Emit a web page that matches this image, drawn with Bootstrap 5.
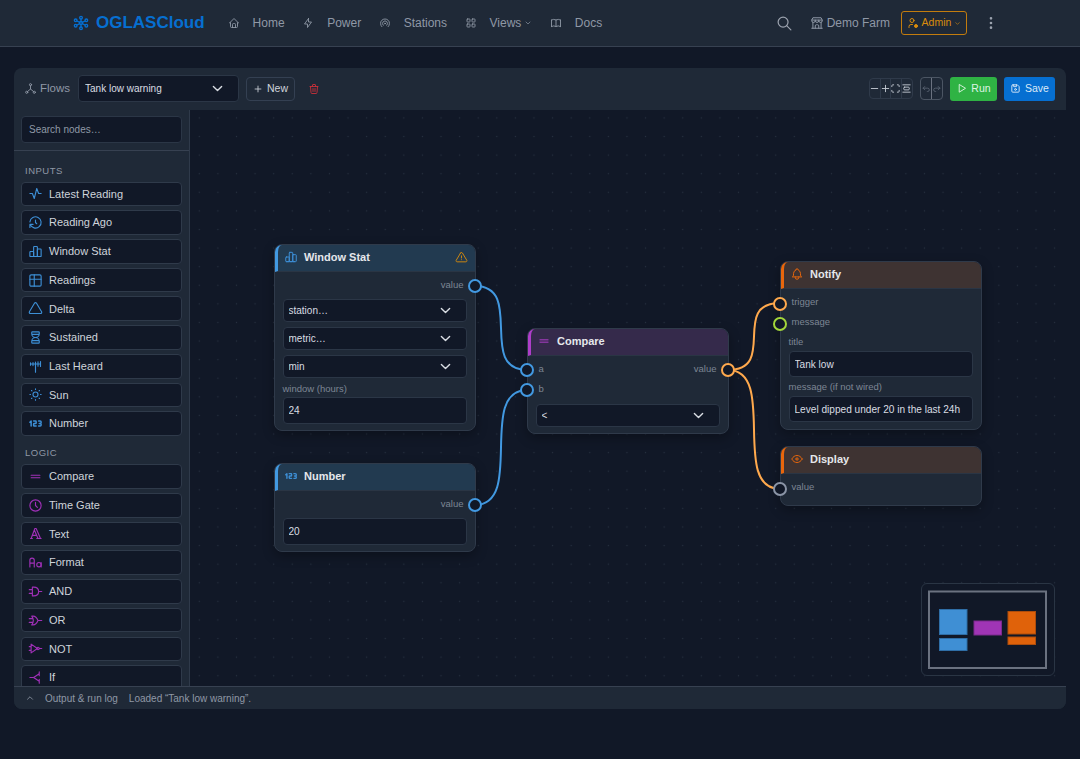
<!DOCTYPE html>
<html lang="en" data-bs-theme="dark">
<head>
<meta charset="utf-8">
<title>OGLASCloud Flows</title>
<link rel="stylesheet" href="https://cdn.jsdelivr.net/npm/bootstrap@5.3.0/dist/css/bootstrap.min.css">
<style>
html,body{height:100%}
body{background:#111827;color:#d1d5db;font-family:"Liberation Sans",Arial,sans-serif;font-size:12px;overflow:hidden}
.ic{width:1em;height:1em;fill:none;stroke:currentColor;stroke-width:2;stroke-linecap:round;stroke-linejoin:round;flex:none;display:block}
.topbar{height:47px;background:#1f2937;border-bottom:1px solid #374151;padding:0 81px 0 73px}
.brandline{color:#066fd1;font-size:17px;font-weight:700;text-decoration:none;gap:7px;margin-right:23px}
.brandline .ic{font-size:16px}
.toplink{color:#8f98a6;text-decoration:none;font-size:12px;gap:13px;margin-right:17.500px}
.toplink .ic{font-size:12px;stroke-width:1.8}
.toplink .chev{font-size:8px;margin-left:-10px;stroke-width:2}
.farm{color:#8f98a6;font-size:12px;gap:3px}
.farm .ic{font-size:14px;stroke-width:1.7}
.srch{color:#9ca3af;font-size:17px;margin-right:17px}
.srch .ic{stroke-width:1.7}
.adminbtn{height:24px;width:66px;border:1px solid #c27c0e;border-radius:3px;color:#d98c0c;font-size:10.5px;font-weight:500;gap:3px;margin-left:11px;padding:0;background:transparent}
.adminbtn .ic{font-size:12px}
.adminbtn .chev{font-size:7px}
.kebab{color:#9ca3af;font-size:16px;margin-left:16px}
.wrap{padding:21px 14px 0}
.panel{height:641px;background:#1f2937;border-radius:8px;overflow:hidden}
.tools{height:42px;padding:0 11px 0 10px;border-bottom:1px solid #1f2937}
.flowlbl{color:#8f98a6;font-size:11.5px;gap:3px;margin-right:8px}
.flowlbl .ic{font-size:13px;stroke-width:1.7}
.fieldish{background-color:#111827;border:1px solid #2b3646;color:#d9dde3;border-radius:4px;font-size:10px;padding:0 7px;width:100%;box-shadow:none}
select.fieldish{appearance:none;background-image:url("data:image/svg+xml,%3csvg xmlns='http://www.w3.org/2000/svg' viewBox='0 0 16 16'%3e%3cpath fill='none' stroke='%23d9dde3' stroke-linecap='round' stroke-linejoin='round' stroke-width='2' d='m2 5 6 6 6-6'/%3e%3c/svg%3e");background-repeat:no-repeat;background-position:right 15px center;background-size:11px 11px}
.fieldish:focus{outline:none}
.flowsel{width:161px;height:27px;padding-left:6px;background-position:right 14px center;background-size:13px 13px;margin-right:6px}
.newbtn{width:49px;height:24px;border:1px solid #344052;border-radius:4px;background:transparent;color:#cfd4db;font-size:10.5px;font-weight:500;gap:4px;padding:0;margin-left:1px}
.newbtn .ic{font-size:10px}
.trashbtn{color:#c9303a;font-size:12px;margin-left:13px}
.trashbtn .ic{stroke-width:1.8}
.zoomset{height:21px;border:1px solid #2f3a4a;border-radius:4px;margin-right:7px;overflow:hidden}
.zoomset span{width:10.500px;height:100%;display:flex;align-items:center;justify-content:center;color:#c3c9d2;border-right:1px solid #2f3a4a;font-size:11px}
.zoomset span:last-child{border-right:0}
.undoset{height:23px;border:1px solid #4b5563;border-radius:4px;margin-right:7px;overflow:hidden}
.undoset span{width:10.500px;height:100%;display:flex;align-items:center;justify-content:center;color:#5d6675;border-right:1px solid #6b7280;font-size:10px}
.undoset span:last-child{border-right:0}
.runbtn,.savebtn{height:24px;border:0;border-radius:3px;color:#dff5e4;font-size:10.5px;font-weight:500;gap:4px;padding:0}
.runbtn{width:47px;background:#2fb344;margin-right:7px}
.savebtn{width:51px;background:#066fd1;color:#dbe9f7}
.runbtn .ic,.savebtn .ic{font-size:11px}
.workarea{height:576px}
.leftcol{width:176px;flex:none;background:#1f2937;border-right:1px solid #2f3a4a;overflow:hidden}
.searchzone{height:41px;padding:6px 7px 0;border-bottom:1px solid #374151}
.searchzone .fieldish{height:27px;color:#9ca3af;font-size:10px;padding-left:7px}
.searchzone .fieldish::placeholder{color:#8f98a6;opacity:1}
.groupa{padding-top:13.500px}
.groupb{padding-top:7px}
.grouplbl{font-size:9.5px;letter-spacing:.5px;color:#8f98a6;height:11px;line-height:11px;padding-left:11px;margin-bottom:6px}
.blockitem{height:24.7px;margin:0 7px 4.050px;border:1px solid #2f3a4a;border-radius:4px;background:#111827;color:#cfd4db;font-size:11px;gap:6px;padding-left:6px}
.blockitem .ic{font-size:15px;stroke-width:1.8}
.tone-blue .ic{color:#3d8fd6}
.tone-purple .ic{color:#a030b8}
.stage{flex:1;position:relative;overflow:hidden;background-color:#111827;background-image:radial-gradient(circle,#273140 .8px,transparent 1px);background-size:18.6px 18.6px;background-position:0 -1.4px}
.wires{position:absolute;left:0;top:0;width:100%;height:100%}
.flownode{position:absolute;width:202px;background:#1f2937;border:1px solid #2f3a4a;border-radius:8px;box-shadow:0 4px 12px rgba(0,0,0,.3)}
.nodehead{height:27px;border-bottom:1px solid #2a3544;border-left:3px solid;border-radius:7px 7px 0 0;color:#e5e7eb;font-size:11px;font-weight:700;padding:0 7px 2px 6px;gap:6px}
.nodehead .ic{font-size:14px;stroke-width:1.7}
.h-blue{background:#223a50;border-left-color:#4299e1}
.h-blue .ic{color:#3d8fd6}
.h-purple{background:#352a4b;border-left-color:#ae3ec9}
.h-purple .ic{color:#ae3ec9}
.h-orange{background:#3e3332;border-left-color:#e8660c}
.h-orange .ic{color:#e8660c}
.nodehead .warnmark{color:#d98c0c;margin-left:auto;font-size:13px}
.nodebody{padding:0 8px 0 7.500px}
.portrow{height:20px;font-size:9.5px;color:#7d8694;position:relative;padding:0 3.500px 2px 3px}
.toprow{margin-top:4px}
.toprow-out{margin:4px 0 3px}
.toprow-n{margin-top:5px}
.lblup{padding-bottom:4px}
.nodelbl{font-size:9.5px;color:#7d8694;line-height:11px}
.gaplbl{margin-bottom:3px}
.titlelbl{margin:2px 0 4px}
.nodesel{height:23px;margin-bottom:5px;font-size:10px;padding-left:5px}
.nodeinput{height:27px;font-size:10.100px;padding:0 5px}
.shortinput{height:26px}
.portdot{position:absolute;width:14px;height:14px;border-radius:50%;border:2.300px solid #4299e1;background:#111827;top:50%;margin-top:-7px;z-index:3}
.p-left{left:-16px}
.p-right{right:-15px}
.c-orange{border-color:#ffa94d}
.c-lime{border-color:#a3d63a}
.c-grey{border-color:#8a94a6}
.minimapbox{position:absolute;left:730.700px;top:473.300px;width:134.500px;height:93px;border:1px solid #2a3544;border-radius:6px;background:#111827}
.minimapbox svg{display:block;width:100%;height:100%}
.logbar{height:23px;background:#1f2937;border-top:1px solid #374151;padding-left:11px;font-size:10px;color:#8f98a6}
.logbar .ic{font-size:10px;margin-right:10px}
.logbar .logtitle{margin-right:11px}
</style>
</head>
<body>
<svg width="0" height="0" class="position-absolute">
<defs>
<symbol id="i-logo" viewBox="0 0 24 24"><circle cx="12" cy="12" r="2.2"/><circle cx="12" cy="4" r="2"/><circle cx="12" cy="20" r="2"/><circle cx="4" cy="8" r="2"/><circle cx="20" cy="8" r="2"/><circle cx="4" cy="16" r="2"/><circle cx="20" cy="16" r="2"/><path d="M12 6v4M12 14v4M6 9l4 2M18 9l-4 2M6 15l4-2M18 15l-4-2"/></symbol>
<symbol id="i-home" viewBox="0 0 24 24"><path d="M5 12H3l9-9 9 9h-2M5 12v7a2 2 0 0 0 2 2h10a2 2 0 0 0 2-2v-7M9 21v-6a2 2 0 0 1 2-2h2a2 2 0 0 1 2 2v6"/></symbol>
<symbol id="i-bolt" viewBox="0 0 24 24"><path d="M13 3v7h6l-8 11v-7H5l8-11"/></symbol>
<symbol id="i-station" viewBox="0 0 24 24"><path d="M18.364 19.364a9 9 0 1 0-12.728 0M15.536 16.536a5 5 0 1 0-7.072 0"/><circle cx="12" cy="13" r="1"/></symbol>
<symbol id="i-grid" viewBox="0 0 24 24"><rect x="4" y="4" width="6" height="6" rx="1"/><rect x="14" y="4" width="6" height="6" rx="1"/><rect x="4" y="14" width="6" height="6" rx="1"/><rect x="14" y="14" width="6" height="6" rx="1"/></symbol>
<symbol id="i-book" viewBox="0 0 24 24"><path d="M3 19a9 9 0 0 1 9 0 9 9 0 0 1 9 0M3 6a9 9 0 0 1 9 0 9 9 0 0 1 9 0M3 6v13M12 6v13M21 6v13"/></symbol>
<symbol id="i-chev" viewBox="0 0 24 24"><path d="M6 9l6 6 6-6"/></symbol>
<symbol id="i-chevup" viewBox="0 0 24 24"><path d="M6 15l6-6 6 6"/></symbol>
<symbol id="i-search" viewBox="0 0 24 24"><circle cx="10" cy="10" r="7"/><path d="M21 21l-6-6"/></symbol>
<symbol id="i-store" viewBox="0 0 24 24"><path d="M3 21h18M3 7v1a3 3 0 0 0 6 0V7m0 1a3 3 0 0 0 6 0V7m0 1a3 3 0 0 0 6 0V7H3l2-4h14l2 4M5 21V10.85M19 21V10.85M9 21v-4a2 2 0 0 1 2-2h2a2 2 0 0 1 2 2v4"/></symbol>
<symbol id="i-usercog" viewBox="0 0 24 24"><circle cx="10" cy="7" r="4"/><path d="M4 21v-2a4 4 0 0 1 4-4h3"/><circle cx="18" cy="18" r="3" fill="currentColor"/></symbol>
<symbol id="i-dots" viewBox="0 0 24 24"><circle cx="12" cy="5" r="1"/><circle cx="12" cy="12" r="1"/><circle cx="12" cy="19" r="1"/></symbol>
<symbol id="i-tree" viewBox="0 0 24 24"><circle cx="12" cy="5" r="2"/><circle cx="5" cy="19" r="2"/><circle cx="19" cy="19" r="2"/><path d="M6.5 17.5L12 13l5.500 4.500M12 7v6"/></symbol>
<symbol id="i-plus" viewBox="0 0 24 24"><path d="M12 5v14M5 12h14"/></symbol>
<symbol id="i-minus" viewBox="0 0 24 24"><path d="M5 12h14"/></symbol>
<symbol id="i-trash" viewBox="0 0 24 24"><path d="M4 7h16M10 11v6M14 11v6M5 7l1 12a2 2 0 0 0 2 2h8a2 2 0 0 0 2-2l1-12M9 7V4a1 1 0 0 1 1-1h4a1 1 0 0 1 1 1v3"/></symbol>
<symbol id="i-max" viewBox="0 0 24 24"><path d="M4 8V6a2 2 0 0 1 2-2h2M4 16v2a2 2 0 0 0 2 2h2M16 4h2a2 2 0 0 1 2 2v2M16 20h2a2 2 0 0 0 2-2v-2"/></symbol>
<symbol id="i-align" viewBox="0 0 24 24"><path d="M4 4h16M4 20h16"/><rect x="6" y="9" width="12" height="6" rx="2"/></symbol>
<symbol id="i-undo" viewBox="0 0 24 24"><path d="M9 14l-4-4 4-4M5 10h11a4 4 0 1 1 0 8h-1"/></symbol>
<symbol id="i-redo" viewBox="0 0 24 24"><path d="M15 14l4-4-4-4M19 10H8a4 4 0 1 0 0 8h1"/></symbol>
<symbol id="i-play" viewBox="0 0 24 24"><path d="M7 4v16l13-8z"/></symbol>
<symbol id="i-save" viewBox="0 0 24 24"><path d="M6 4h10l4 4v10a2 2 0 0 1-2 2H6a2 2 0 0 1-2-2V6a2 2 0 0 1 2-2"/><circle cx="12" cy="14" r="2"/><path d="M14 4v4H8V4"/></symbol>
<symbol id="i-activity" viewBox="0 0 24 24"><path d="M3 12h4l3 8 4-16 3 8h4"/></symbol>
<symbol id="i-history" viewBox="0 0 24 24"><path d="M12 8v4l2 2M3.050 11a9 9 0 1 1 .5 4m-.5 5v-5h5"/></symbol>
<symbol id="i-bars" viewBox="0 0 24 24"><rect x="3" y="12" width="6" height="8" rx="1"/><rect x="15" y="8" width="6" height="12" rx="1"/><rect x="9" y="4" width="6" height="16" rx="1"/><path d="M4 20h14"/></symbol>
<symbol id="i-table" viewBox="0 0 24 24"><rect x="3" y="3" width="18" height="18" rx="2"/><path d="M3 10h18M10 3v18"/></symbol>
<symbol id="i-delta" viewBox="0 0 24 24"><path d="M10.363 3.591l-8.106 13.534a1.914 1.914 0 0 0 1.636 2.871h16.214a1.914 1.914 0 0 0 1.636-2.870L13.637 3.590a1.914 1.914 0 0 0-3.274 0z"/></symbol>
<symbol id="i-hour" viewBox="0 0 24 24"><path d="M6.500 7h11M6.500 17h11M6 20v-2a6 6 0 1 1 12 0v2a1 1 0 0 1-1 1H7a1 1 0 0 1-1-1zM6 4v2a6 6 0 1 0 12 0V4a1 1 0 0 0-1-1H7a1 1 0 0 0-1 1z"/></symbol>
<symbol id="i-antenna" viewBox="0 0 24 24"><path d="M20 4v8M16 4.500v7M12 5v16M8 5.500v5M4 6v4M20 8H4"/></symbol>
<symbol id="i-sun" viewBox="0 0 24 24"><circle cx="12" cy="12" r="4"/><path d="M3 12h1m8-9v1m8 8h1m-9 8v1M5.600 5.600l.7.7m12.100-.7l-.7.7m0 11.400l.7.7m-12.100-.7l-.7.7"/></symbol>
<symbol id="i-num" viewBox="0 0 24 24"><path stroke-width="2.400" d="M3 10l2-2v8M9 8h3a1 1 0 0 1 1 1v2a1 1 0 0 1-1 1h-2a1 1 0 0 0-1 1v2a1 1 0 0 0 1 1h3M17 8h2.500A1.500 1.500 0 0 1 21 9.500v1a1.500 1.500 0 0 1-1.500 1.500H18h1.500a1.500 1.500 0 0 1 1.500 1.500v1a1.500 1.500 0 0 1-1.500 1.500H17"/></symbol>
<symbol id="i-equal" viewBox="0 0 24 24"><path d="M5 10h14M5 14h14"/></symbol>
<symbol id="i-clock" viewBox="0 0 24 24"><circle cx="12" cy="12" r="9"/><path d="M12 7v5l3 3"/></symbol>
<symbol id="i-type" viewBox="0 0 24 24"><path d="M4 20h3M14 20h7M6.900 15h6.900M10.200 6.300L16 20M5 20l6-16h2l7 16"/></symbol>
<symbol id="i-case" viewBox="0 0 24 24"><circle cx="17.500" cy="15.500" r="3.500"/><path d="M3 19V8.500a3.500 3.500 0 0 1 7 0V19M3 13h7M21 12v7"/></symbol>
<symbol id="i-and" viewBox="0 0 24 24"><path d="M22 12h-5M2 9h5M2 15h5M9 5c6 0 8 3.500 8 7s-2 7-8 7H7V5h2z"/></symbol>
<symbol id="i-or" viewBox="0 0 24 24"><path d="M22 12h-6M2 9h5M2 15h5M6 5h2c3.500 0 6 2 8 7-2 5-4.500 7-8 7H6c1.500-2 2.500-4 2.500-7S7.500 7 6 5z"/></symbol>
<symbol id="i-not" viewBox="0 0 24 24"><path d="M22 12h-4M2 9h3M2 15h3M5 5l10 7-10 7z"/><circle cx="16" cy="12" r="2"/></symbol>
<symbol id="i-if" viewBox="0 0 24 24"><path d="M3 12h6l9-6M9 12l9 6M18 3v6M18 15v6"/></symbol>
<symbol id="i-warn" viewBox="0 0 24 24"><path d="M12 9v4M10.363 3.591l-8.106 13.534a1.914 1.914 0 0 0 1.636 2.871h16.214a1.914 1.914 0 0 0 1.636-2.870L13.637 3.590a1.914 1.914 0 0 0-3.274 0zM12 16h.01"/></symbol>
<symbol id="i-bell" viewBox="0 0 24 24"><path d="M10 5a2 2 0 1 1 4 0 7 7 0 0 1 4 6v3a4 4 0 0 0 2 3H4a4 4 0 0 0 2-3v-3a7 7 0 0 1 4-6M9 17v1a3 3 0 0 0 6 0v-1"/></symbol>
<symbol id="i-eye" viewBox="0 0 24 24"><path d="M10 12a2 2 0 1 0 4 0 2 2 0 0 0-4 0"/><path d="M21 12c-2.400 4-5.400 6-9 6s-6.600-2-9-6c2.400-4 5.400-6 9-6s6.600 2 9 6"/></symbol>
</defs>
</svg>

<nav class="topbar d-flex align-items-center">
  <a class="brandline d-flex align-items-center" href="#"><svg class="ic"><use href="#i-logo"/></svg>OGLASCloud</a>
  <a class="toplink d-flex align-items-center" href="#"><svg class="ic"><use href="#i-home"/></svg>Home</a>
  <a class="toplink d-flex align-items-center" href="#"><svg class="ic"><use href="#i-bolt"/></svg>Power</a>
  <a class="toplink d-flex align-items-center" href="#"><svg class="ic"><use href="#i-station"/></svg>Stations</a>
  <a class="toplink d-flex align-items-center" href="#"><svg class="ic"><use href="#i-grid"/></svg>Views<svg class="ic chev"><use href="#i-chev"/></svg></a>
  <a class="toplink d-flex align-items-center" href="#"><svg class="ic"><use href="#i-book"/></svg>Docs</a>
  <div class="ms-auto d-flex align-items-center">
    <span class="srch"><svg class="ic"><use href="#i-search"/></svg></span>
    <span class="farm d-flex align-items-center"><svg class="ic"><use href="#i-store"/></svg>Demo Farm</span>
    <button class="btn adminbtn d-flex align-items-center justify-content-center"><svg class="ic"><use href="#i-usercog"/></svg>Admin<svg class="ic chev"><use href="#i-chev"/></svg></button>
    <span class="kebab"><svg class="ic"><use href="#i-dots"/></svg></span>
  </div>
</nav>

<main class="wrap">
  <section class="panel d-flex flex-column">
    <div class="tools d-flex align-items-center">
      <span class="flowlbl d-flex align-items-center"><svg class="ic"><use href="#i-tree"/></svg>Flows</span>
      <select class="fieldish flowsel"><option>Tank low warning</option></select>
      <button class="btn newbtn d-flex align-items-center justify-content-center"><svg class="ic"><use href="#i-plus"/></svg>New</button>
      <span class="trashbtn"><svg class="ic"><use href="#i-trash"/></svg></span>
      <div class="ms-auto d-flex align-items-center">
        <div class="zoomset d-flex"><span><svg class="ic"><use href="#i-minus"/></svg></span><span><svg class="ic"><use href="#i-plus"/></svg></span><span><svg class="ic"><use href="#i-max"/></svg></span><span><svg class="ic"><use href="#i-align"/></svg></span></div>
        <div class="undoset d-flex"><span><svg class="ic"><use href="#i-undo"/></svg></span><span><svg class="ic"><use href="#i-redo"/></svg></span></div>
        <button class="btn runbtn d-flex align-items-center justify-content-center"><svg class="ic"><use href="#i-play"/></svg>Run</button>
        <button class="btn savebtn d-flex align-items-center justify-content-center"><svg class="ic"><use href="#i-save"/></svg>Save</button>
      </div>
    </div>
    <div class="workarea d-flex">
      <aside class="leftcol">
        <div class="searchzone"><input class="fieldish" placeholder="Search nodes…"></div>
        <div class="tone-blue groupa">
          <div class="grouplbl">INPUTS</div>
          <div class="blockitem d-flex align-items-center"><svg class="ic"><use href="#i-activity"/></svg>Latest Reading</div>
          <div class="blockitem d-flex align-items-center"><svg class="ic"><use href="#i-history"/></svg>Reading Ago</div>
          <div class="blockitem d-flex align-items-center"><svg class="ic"><use href="#i-bars"/></svg>Window Stat</div>
          <div class="blockitem d-flex align-items-center"><svg class="ic"><use href="#i-table"/></svg>Readings</div>
          <div class="blockitem d-flex align-items-center"><svg class="ic"><use href="#i-delta"/></svg>Delta</div>
          <div class="blockitem d-flex align-items-center"><svg class="ic"><use href="#i-hour"/></svg>Sustained</div>
          <div class="blockitem d-flex align-items-center"><svg class="ic"><use href="#i-antenna"/></svg>Last Heard</div>
          <div class="blockitem d-flex align-items-center"><svg class="ic"><use href="#i-sun"/></svg>Sun</div>
          <div class="blockitem d-flex align-items-center"><svg class="ic"><use href="#i-num"/></svg>Number</div>
        </div>
        <div class="tone-purple groupb">
          <div class="grouplbl">LOGIC</div>
          <div class="blockitem d-flex align-items-center"><svg class="ic"><use href="#i-equal"/></svg>Compare</div>
          <div class="blockitem d-flex align-items-center"><svg class="ic"><use href="#i-clock"/></svg>Time Gate</div>
          <div class="blockitem d-flex align-items-center"><svg class="ic"><use href="#i-type"/></svg>Text</div>
          <div class="blockitem d-flex align-items-center"><svg class="ic"><use href="#i-case"/></svg>Format</div>
          <div class="blockitem d-flex align-items-center"><svg class="ic"><use href="#i-and"/></svg>AND</div>
          <div class="blockitem d-flex align-items-center"><svg class="ic"><use href="#i-or"/></svg>OR</div>
          <div class="blockitem d-flex align-items-center"><svg class="ic"><use href="#i-not"/></svg>NOT</div>
          <div class="blockitem d-flex align-items-center"><svg class="ic"><use href="#i-if"/></svg>If</div>
        </div>
      </aside>
      <div class="stage">
        <svg class="wires" fill="none" stroke-width="2" stroke-linecap="round">
          <path stroke="#4299e1" d="M285 176C335 176 287 260 337 260"/>
          <path stroke="#4299e1" d="M285 395C335 395 287 280 337 280"/>
          <path stroke="#ffa94d" d="M538 260C588 260 540 193 590 193"/>
          <path stroke="#ffa94d" d="M538 260C588 260 540 379 590 379"/>
        </svg>

        <div class="flownode" style="left:84px;top:134px;height:187px">
          <div class="nodehead d-flex align-items-center h-blue"><svg class="ic"><use href="#i-bars"/></svg>Window Stat<svg class="ic warnmark"><use href="#i-warn"/></svg></div>
          <div class="nodebody">
            <div class="portrow d-flex align-items-center justify-content-end toprow-out">value<i class="portdot p-right"></i></div>
            <select class="fieldish nodesel"><option>station…</option></select>
            <select class="fieldish nodesel"><option>metric…</option></select>
            <select class="fieldish nodesel"><option>min</option></select>
            <div class="nodelbl gaplbl">window (hours)</div>
            <input class="fieldish nodeinput" value="24">
          </div>
        </div>

        <div class="flownode" style="left:84px;top:353px;height:89px">
          <div class="nodehead d-flex align-items-center h-blue"><svg class="ic"><use href="#i-num"/></svg>Number</div>
          <div class="nodebody">
            <div class="portrow d-flex align-items-center justify-content-end toprow-out">value<i class="portdot p-right"></i></div>
            <input class="fieldish nodeinput" value="20">
          </div>
        </div>

        <div class="flownode" style="left:337px;top:218px;height:106px">
          <div class="nodehead d-flex align-items-center h-purple"><svg class="ic"><use href="#i-equal"/></svg>Compare</div>
          <div class="nodebody">
            <div class="portrow d-flex align-items-center justify-content-between toprow">a<span>value</span><i class="portdot p-left"></i><i class="portdot p-right c-orange"></i></div>
            <div class="portrow d-flex align-items-center">b<i class="portdot p-left"></i></div>
            <select class="fieldish nodesel mt-1"><option>&lt;</option></select>
          </div>
        </div>

        <div class="flownode" style="left:590px;top:151px;height:169px">
          <div class="nodehead d-flex align-items-center h-orange"><svg class="ic"><use href="#i-bell"/></svg>Notify</div>
          <div class="nodebody">
            <div class="portrow lblup d-flex align-items-center toprow-n">trigger<i class="portdot p-left c-orange"></i></div>
            <div class="portrow lblup d-flex align-items-center">message<i class="portdot p-left c-lime"></i></div>
            <div class="nodelbl titlelbl">title</div>
            <input class="fieldish nodeinput shortinput" value="Tank low">
            <div class="nodelbl mt-1 mb-1">message (if not wired)</div>
            <input class="fieldish nodeinput shortinput" value="Level dipped under 20 in the last 24h">
          </div>
        </div>

        <div class="flownode" style="left:590px;top:336px;height:60px">
          <div class="nodehead d-flex align-items-center h-orange"><svg class="ic"><use href="#i-eye"/></svg>Display</div>
          <div class="nodebody">
            <div class="portrow lblup d-flex align-items-center toprow-n">value<i class="portdot p-left c-grey"></i></div>
          </div>
        </div>

        <div class="minimapbox">
          <svg viewBox="0 0 132.500 91">
            <rect x="7" y="7.500" width="117" height="76.500" fill="none" stroke="#6b7280" stroke-width="2"/>
            <g stroke-width="1">
            <rect x="17.500" y="25.500" width="27.500" height="25" fill="#3f8fd4" stroke="#2f6ea6"/>
            <rect x="17.500" y="54.500" width="27.500" height="12" fill="#3f8fd4" stroke="#2f6ea6"/>
            <rect x="52" y="37" width="27.500" height="14" fill="#a035b5" stroke="#7d2a8e"/>
            <rect x="86" y="27.500" width="27.500" height="22.500" fill="#e0620a" stroke="#ad4d0c"/>
            <rect x="86" y="53" width="27.500" height="7.500" fill="#e0620a" stroke="#ad4d0c"/>
            </g>
          </svg>
        </div>
      </div>
    </div>
    <div class="logbar d-flex align-items-center"><svg class="ic"><use href="#i-chevup"/></svg><span class="logtitle">Output &amp; run log</span><span>Loaded “Tank low warning”.</span></div>
  </section>
</main>
<script src="https://cdn.jsdelivr.net/npm/bootstrap@5.3.0/dist/js/bootstrap.bundle.min.js"></script>
</body>
</html>
